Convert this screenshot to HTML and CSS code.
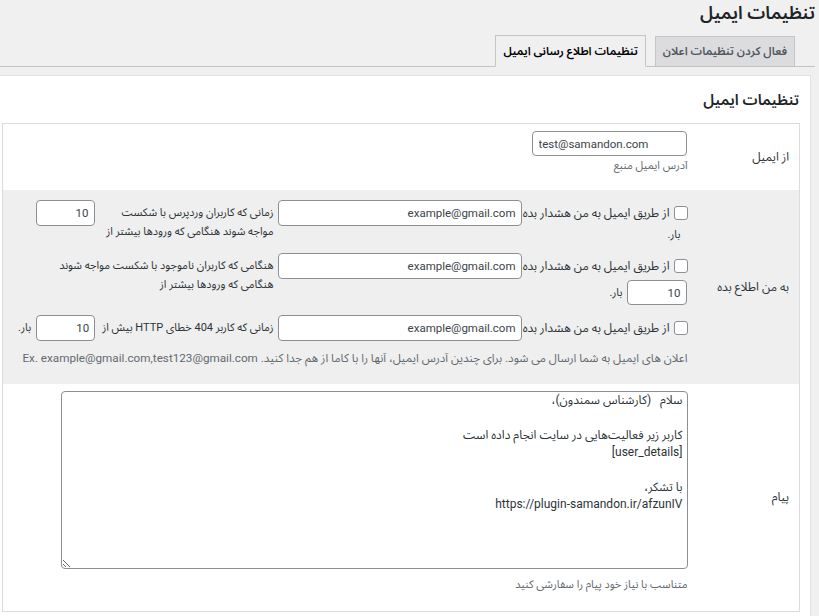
FILE: index.html
```html
<!DOCTYPE html>
<html lang="fa" dir="rtl">
<head>
<meta charset="utf-8">
<title>تنظیمات ایمیل</title>
<link rel="stylesheet" href="styles.css">
</head>
<body>
<div class="wrap">
  <h1 class="page-title">تنظیمات ایمیل</h1>
  <nav class="tabs">
    <a class="tab">فعال کردن تنظیمات اعلان</a>
    <a class="tab tab-active">تنظیمات اطلاع رسانی ایمیل</a>
  </nav>
  <div class="panel">
    <h2 class="section-title">تنظیمات ایمیل</h2>
    <table class="form-table">
      <tr class="row-from">
        <th>از ایمیل</th>
        <td>
          <input class="text-input from-input" dir="ltr" type="text" value="test@samandon.com">
          <p class="desc">آدرس ایمیل منبع</p>
        </td>
      </tr>
      <tr class="row-alerts">
        <th>به من اطلاع بده</th>
        <td>
          <div class="alert-row alert-1">
            <div class="alert-main">
              <label class="check-line"><input class="check" type="checkbox"><span>از طریق ایمیل به من هشدار بده</span></label>
              <span class="times times-under">بار.</span>
            </div>
            <input class="text-input email-input" type="text" value="example@gmail.com">
            <span class="note note-1">زمانی که کاربران وردپرس با شکست مواجه شوند هنگامی که ورودها بیشتر از</span>
            <input class="text-input num-input" type="text" value="10">
          </div>
          <div class="alert-row alert-2">
            <div class="alert-main">
              <label class="check-line"><input class="check" type="checkbox"><span>از طریق ایمیل به من هشدار بده</span></label>
              <div class="extra">
                <input class="text-input num-input" type="text" value="10">
                <span class="times">بار.</span>
              </div>
            </div>
            <input class="text-input email-input" type="text" value="example@gmail.com">
            <span class="note note-2">هنگامی که کاربران ناموجود با شکست مواجه شوند هنگامی که ورودها بیشتر از</span>
          </div>
          <div class="alert-row alert-3">
            <div class="alert-main">
              <label class="check-line"><input class="check" type="checkbox"><span>از طریق ایمیل به من هشدار بده</span></label>
            </div>
            <input class="text-input email-input" type="text" value="example@gmail.com">
            <span class="note">زمانی که کاربر 404 خطای HTTP بیش از</span>
            <input class="text-input num-input" type="text" value="10">
            <span class="times times-inline">بار.</span>
          </div>
          <p class="desc desc-alerts">اعلان های ایمیل به شما ارسال می شود. برای چندین آدرس ایمیل، آنها را با کاما از هم جدا کنید. Ex. example@gmail.com,test123@gmail.com</p>
        </td>
      </tr>
      <tr class="row-message">
        <th>پیام</th>
        <td>
          <textarea class="message">سلام   (کارشناس سمندون)،

کاربر زیر فعالیت‌هایی در سایت انجام داده است
[user_details]

با تشکر،
https://plugin-samandon.ir/afzunIV</textarea>
          <p class="desc desc-message">متناسب با نیاز خود پیام را سفارشی کنید</p>
        </td>
      </tr>
    </table>
  </div>
</div>
</body>
</html>
```
FILE: styles.css
```css
* { box-sizing: border-box; }

html, body {
  margin: 0;
  padding: 0;
}

body {
  width: 819px;
  height: 616px;
  overflow: hidden;
  background: #f0f0f1;
  color: #3c434a;
  font-family: Roboto, "Noto Sans Arabic", "DejaVu Sans", sans-serif;
  font-size: 11px;
  direction: rtl;
}

.wrap {
  padding: 0 4px 0 0;
}

.page-title {
  margin: 0;
  font-size: 18px;
  line-height: 26px;
  font-weight: 600;
  color: #1d2327;
}

.tabs {
  display: flex;
  align-items: flex-start;
  gap: 9px;
  padding: 9px 20px 0 0;
  border-bottom: 1px solid #c3c4c7;
}

.tab {
  display: block;
  margin-bottom: -1px;
  padding: 5px 7px;
  font-size: 11.5px;
  line-height: 20px;
  font-weight: 600;
  color: #50575e;
  background: #dcdcde;
  border: 1px solid #c3c4c7;
  white-space: nowrap;
}

.tabs .tab:first-child {
  margin-top: 1px;
  padding-top: 4px;
}

.tab-active {
  color: #000;
  background: #f0f0f1;
  border-bottom-color: #f0f0f1;
}

.panel {
  margin: 8px 4px 0 0;
  padding: 14px 10px 10px 2px;
  background: #fff;
  border: 1px solid #e2e2e4;
  border-left: none;
}

.section-title {
  margin: 0 0 13px;
  padding-right: 1px;
  font-size: 15px;
  line-height: 20px;
  font-weight: 600;
  color: #1d2327;
}

.form-table {
  width: 100%;
  border-collapse: collapse;
  border: 1px solid #dcdcde;
}

.form-table th {
  width: 100px;
  padding: 0 10px 0 0;
  text-align: right;
  vertical-align: middle;
  font-weight: 400;
  font-size: 12px;
  color: #2c3338;
}

.form-table td {
  padding: 0 12px 0 10px;
  vertical-align: top;
}

.row-from td { padding-top: 7px; padding-bottom: 16px; }
.row-alerts { background: #efefef; }
.row-alerts td { padding-top: 10px; padding-bottom: 18px; }
.row-message td { padding-top: 7px; padding-bottom: 18px; }

.text-input {
  display: block;
  height: 26px;
  margin: 0;
  padding: 0 5px;
  font-family: Roboto, "Noto Sans Arabic", "DejaVu Sans", sans-serif;
  font-size: 11.5px;
  color: #3c434a;
  background: #fff;
  border: 1px solid #8c8f94;
  border-radius: 4px;
  outline: none;
}

.from-input {
  width: 155px;
  height: 25px;
  margin-right: 1px;
  padding: 0 6px;
  text-align: left;
}

.email-input {
  width: 244px;
  flex: none;
}

.num-input {
  width: 59px;
  flex: none;
}

.desc {
  margin: 2px 0 0;
  font-size: 11px;
  line-height: 16px;
  color: #646970;
}

.desc-alerts {
  margin-top: 9px;
  font-size: 11.7px;
  white-space: nowrap;
}

.desc-message { margin-top: 8px; }

.alert-row {
  display: flex;
  align-items: flex-start;
  gap: 4px;
}

.alert-1 { height: 41px; margin-bottom: 12px; }
.alert-2 { height: 52px; margin-bottom: 10px; }
.alert-3 { height: 26px; }

.alert-main {
  width: 162px;
  flex: none;
}

.check-line {
  display: flex;
  align-items: center;
  gap: 4px;
  height: 26px;
  font-size: 12px;
  color: #2c3338;
  white-space: nowrap;
}

.check {
  appearance: none;
  -webkit-appearance: none;
  flex: none;
  width: 14px;
  height: 14px;
  margin: 0;
  background: #fff;
  border: 1px solid #8c8f94;
  border-radius: 3px;
}

.times {
  font-size: 11px;
  line-height: 16px;
  color: #2c3338;
}

.times-under {
  display: block;
  padding-right: 7px;
  margin-top: 1px;
}

.times-inline {
  line-height: 26px;
  margin-right: 1px;
}

.extra {
  display: flex;
  align-items: center;
  gap: 4px;
  margin-top: 1px;
  margin-right: 1px;
}

.extra .num-input { height: 25px; width: 60px; }

.note {
  padding-top: 3px;
  font-size: 11px;
  line-height: 19px;
  color: #2c3338;
  white-space: nowrap;
}

.note-1 { width: 174px; white-space: normal; }
.note-2 { width: 222px; white-space: normal; }
.alert-1 .num-input { margin-right: 1px; }
.alert-3 .num-input { margin-right: 3px; }

.message {
  display: block;
  width: 627px;
  height: 178px;
  margin: 0;
  padding: 0 4px;
  font-family: Roboto, "Noto Sans Arabic", "DejaVu Sans", sans-serif;
  font-size: 12px;
  line-height: 17.4px;
  color: #2c3338;
  background: #fff;
  border: 1px solid #8c8f94;
  border-radius: 4px;
  outline: none;
  resize: both;
}
```
